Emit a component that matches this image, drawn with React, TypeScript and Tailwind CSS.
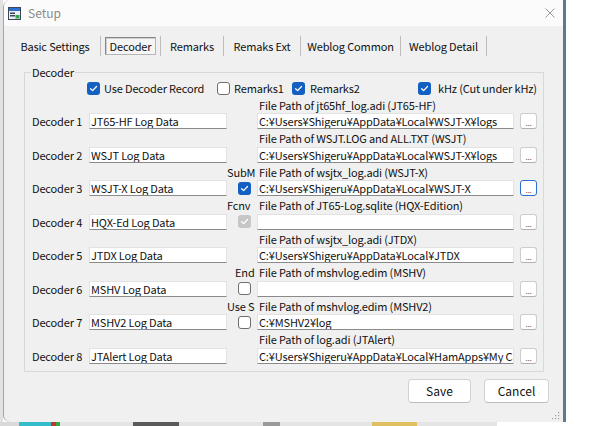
import React from "react";

type CB = "on" | "off" | "dis";

function Check({ state }: { state: CB }) {
  if (state === "off") {
    return <span className="block w-[13px] h-[13px] rounded-[3px] border border-[#6f6f6f] bg-white shrink-0" />;
  }
  return (
    <span
      className={
        state === "on"
          ? "flex w-[13px] h-[13px] rounded-[3px] bg-[#1360c2] items-center justify-center shrink-0"
          : "flex w-[13px] h-[13px] rounded-[3px] bg-[#c6c6c6] items-center justify-center shrink-0"
      }
    >
      <svg width="9" height="9" viewBox="0 0 9 9">
        <path d="M1.6 4.7 L3.6 6.6 L7.5 2.5" stroke="white" strokeWidth="1.3" fill="none" strokeLinecap="round" strokeLinejoin="round" />
      </svg>
    </span>
  );
}

type Row = {
  n: number;
  name: string;
  fl: string;
  path: string;
  mid?: string;
  midPad?: string;
  cb?: CB;
  focus?: boolean;
};

const P1 = "C:¥Users¥Shigeru¥AppData¥Local¥WSJT-X¥logs";

const rows: Row[] = [
  { n: 1, name: "JT65-HF Log Data", fl: "File Path of jt65hf_log.adi (JT65-HF)", path: P1 },
  { n: 2, name: "WSJT Log Data", fl: "File Path of WSJT.LOG and ALL.TXT (WSJT)", path: P1 },
  { n: 3, name: "WSJT-X Log Data", fl: "File Path of wsjtx_log.adi (WSJT-X)", path: "C:¥Users¥Shigeru¥AppData¥Local¥WSJT-X", mid: "SubM", midPad: "pl-0", cb: "on", focus: true },
  { n: 4, name: "HQX-Ed Log Data", fl: "File Path of JT65-Log.sqlite (HQX-Edition)", path: "", mid: "Fcnv", midPad: "pl-0", cb: "dis" },
  { n: 5, name: "JTDX Log Data", fl: "File Path of wsjtx_log.adi (JTDX)", path: "C:¥Users¥Shigeru¥AppData¥Local¥JTDX" },
  { n: 6, name: "MSHV Log Data", fl: "File Path of mshvlog.edim (MSHV)", path: "", mid: "End", midPad: "pl-[8px]", cb: "off" },
  { n: 7, name: "MSHV2 Log Data", fl: "File Path of mshvlog.edim (MSHV2)", path: "C:¥MSHV2¥log", mid: "Use S", midPad: "pl-0", cb: "off" },
  { n: 8, name: "JTAlert Log Data", fl: "File Path of log.adi (JTAlert)", path: "C:¥Users¥Shigeru¥AppData¥Local¥HamApps¥My Ca" },
];

const tabs = [
  { t: "Basic Settings", w: "w-[90px]" },
  { t: "Decoder", w: "w-[59px]", sel: true },
  { t: "Remarks", w: "w-[62px]" },
  { t: "Remaks Ext", w: "w-[76px]" },
  { t: "Weblog Common", w: "w-[99px]" },
  { t: "Weblog Detail", w: "w-[85px]" },
];

function TextBox({ value, w }: { value: string; w: string }) {
  return (
    <div
      className={
        w +
        " h-[16px] bg-white border border-[#e2e2e2] border-b-[#8a8a8a] pl-[1px] flex items-center overflow-hidden whitespace-nowrap leading-[14px] text-[#111]"
      }
    >
      {value}
    </div>
  );
}

export default function App() {
  return (
    <div className="w-[592px] h-[426px] bg-white flex flex-col overflow-hidden font-['Noto_Sans_CJK_JP',sans-serif] text-[11px] tracking-[-0.15px] text-[#111]">
      <div className="flex h-[422px]">
        <div className="w-[3px] bg-[#e2e2e2]" />
        <div className="w-[560px] flex flex-col bg-[#f0f0f0] border-l border-[#a4a4a4] rounded-tl-[7px] rounded-bl-[7px] overflow-hidden">
          {/* title bar */}
          <div className="h-[26px] bg-[#fbfbfb] flex items-center pl-[4px] pr-[8px] shrink-0">
            <svg width="13" height="13" viewBox="0 0 13 13">
              <rect x="0.5" y="0.5" width="12" height="12" fill="#e8eef5" stroke="#3a4756" />
              <rect x="1" y="1" width="11" height="3" fill="#2b6fd1" />
              <rect x="2" y="5.5" width="5" height="1.5" fill="#3a4756" />
              <rect x="2" y="8" width="5" height="1.5" fill="#3a4756" />
              <rect x="7.5" y="8" width="4" height="3.5" fill="#2fa64a" />
            </svg>
            <span className="ml-[7px] text-[12px] tracking-normal leading-[16px] text-[#8a8a8a]">Setup</span>
            <div className="flex-1" />
            <svg width="10" height="10" viewBox="0 0 10 10">
              <path d="M0.5 0.5 L9.5 9.5 M9.5 0.5 L0.5 9.5" stroke="#9a9a9a" strokeWidth="1" />
            </svg>
          </div>

          {/* tabs */}
          <div className="pt-[10px] pl-[6px] flex h-[30px] shrink-0">
            {tabs.map((t) => (
              <React.Fragment key={t.t}>
                <div className={t.w + " h-[20px] flex items-center justify-center"}>
                  {t.sel ? (
                    <div className="mx-[4px] w-full h-[18px] border border-[#858585] border-b-[#b5b5b5] border-r-[#b5b5b5] bg-[#f5f5f5] shadow-[inset_1px_1px_0_#cfcfcf] flex items-center justify-center leading-[14px]">
                      {t.t}
                    </div>
                  ) : (
                    <span className="leading-[14px]">{t.t}</span>
                  )}
                </div>
                <div className="w-[1px] h-[20px] bg-[#bdbdbd]" />
              </React.Fragment>
            ))}
          </div>

          {/* group box */}
          <div className="mt-[16px] ml-[20px] w-[520px] h-[300px] border border-[#d8d8d8] relative shrink-0">
            <span className="absolute left-[6px] top-[-9px] px-[1px] bg-[#f0f0f0] leading-[16px]">Decoder</span>
            <div className="pt-[7px] h-[23px] flex items-center">
              <div className="w-[62px]" />
              <div className="w-[130px] flex items-center">
                <Check state="on" />
                <span className="ml-[4px] leading-[14px] whitespace-nowrap">Use Decoder Record</span>
              </div>
              <div className="w-[75px] flex items-center">
                <Check state="off" />
                <span className="ml-[4px] leading-[14px] whitespace-nowrap">Remarks1</span>
              </div>
              <div className="w-[126px] flex items-center">
                <Check state="on" />
                <span className="ml-[5px] leading-[14px] whitespace-nowrap">Remarks2</span>
              </div>
              <div className="flex items-center">
                <Check state="on" />
                <span className="ml-[7px] leading-[14px] whitespace-nowrap">kHz (Cut under kHz)</span>
              </div>
            </div>

            {rows.map((r) => (
              <div key={r.n} className="h-[33.57px] flex flex-col">
                <div className="h-[17px] flex items-center pl-[7px]">
                  <div className="w-[57px]" />
                  <div className="w-[138px]" />
                  <div className={"w-[30px] whitespace-nowrap leading-[14px] " + (r.midPad ?? "")}>{r.mid ?? ""}</div>
                  <div className="pl-[2px] whitespace-nowrap leading-[14px]">{r.fl}</div>
                </div>
                <div className="h-[16px] flex items-center pl-[7px]">
                  <div className="w-[57px] whitespace-nowrap leading-[14px]">Decoder {r.n}</div>
                  <TextBox value={r.name} w="w-[138px]" />
                  <div className="w-[30px] pl-[11px] flex items-center">{r.cb ? <Check state={r.cb} /> : null}</div>
                  <TextBox value={r.path} w="w-[257px]" />
                  <div
                    className={
                      r.focus
                        ? "ml-[6px] w-[17px] h-[16px] bg-white border border-[#2b6fd1] rounded-[3px] flex items-end justify-center text-[8px] leading-[10px] text-[#555]"
                        : "ml-[6px] w-[17px] h-[16px] bg-white border border-[#cdcdcd] border-b-[#b0b0b0] rounded-[3px] flex items-end justify-center text-[8px] leading-[10px] text-[#555]"
                    }
                  >
                    ...
                  </div>
                </div>
              </div>
            ))}
          </div>

          {/* buttons */}
          <div className="mt-[7px] flex shrink-0">
            <div className="ml-[404px] w-[63px] h-[24px] bg-white border border-[#d2d2d2] border-b-[#bdbdbd] rounded-[4px] flex items-center justify-center text-[12px] tracking-normal leading-[14px]">
              Save
            </div>
            <div className="ml-[13px] w-[65px] h-[24px] bg-white border border-[#d2d2d2] border-b-[#bdbdbd] rounded-[4px] flex items-center justify-center text-[12px] tracking-normal leading-[14px]">
              Cancel
            </div>
          </div>

          <div className="flex-1 flex items-end justify-end pr-[3px] pb-[2px]">
            <svg width="8" height="8" viewBox="0 0 8 8">
              <rect x="6" y="0" width="1.2" height="1.2" fill="#a0a0a0" />
              <rect x="3" y="3" width="1.2" height="1.2" fill="#a0a0a0" />
              <rect x="6" y="3" width="1.2" height="1.2" fill="#a0a0a0" />
              <rect x="0" y="6" width="1.2" height="1.2" fill="#a0a0a0" />
              <rect x="3" y="6" width="1.2" height="1.2" fill="#a0a0a0" />
              <rect x="6" y="6" width="1.2" height="1.2" fill="#a0a0a0" />
            </svg>
          </div>
        </div>
        <div className="w-[3px] bg-[#5f7892]" />
        <div className="flex-1 bg-white" />
      </div>
      <div className="h-[4px] flex bg-white">
        <div className="w-[19px] bg-[#d9d9d9]" />
        <div className="w-[32px] bg-[#35bccb]" />
        <div className="w-[5px] bg-[#c4352a]" />
        <div className="w-[4px] bg-[#35a845]" />
        <div className="w-[73px] bg-[#e4e4e4]" />
        <div className="w-[46px] bg-[#5a5a5a]" />
        <div className="w-[84px] bg-[#e4e4e4]" />
        <div className="w-[17px] bg-[#9a9a9a]" />
        <div className="w-[92px] bg-[#e4e4e4]" />
        <div className="w-[45px] bg-[#dfc060]" />
        <div className="w-[80px] bg-[#e4e4e4]" />
      </div>
    </div>
  );
}
